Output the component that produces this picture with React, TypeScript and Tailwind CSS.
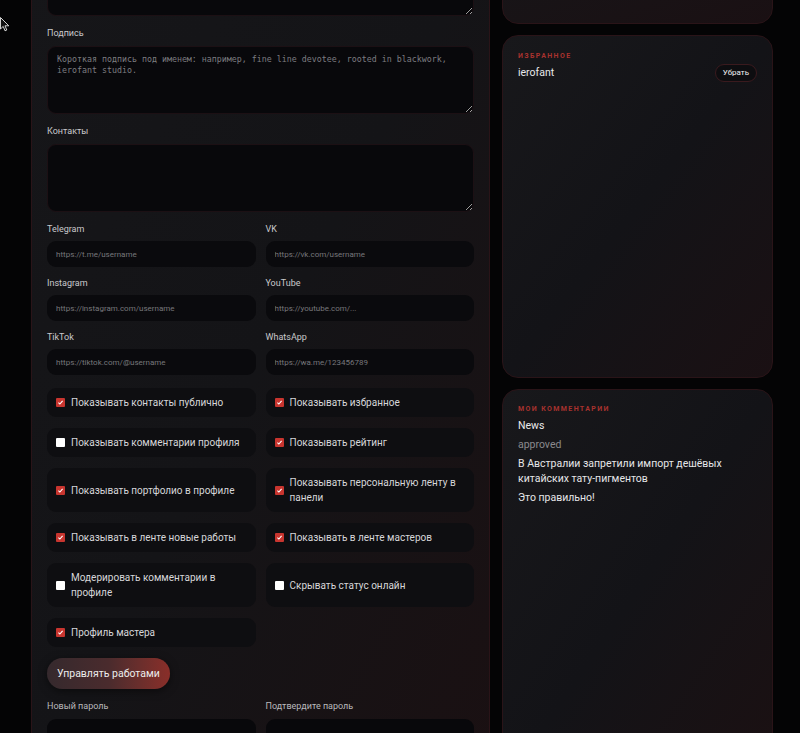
const font = { fontFamily: "Roboto, 'Noto Sans', sans-serif" };

type Check = { label: string; checked: boolean };

const links = [
  { label: "Telegram", ph: "https://t.me/username" },
  { label: "VK", ph: "https://vk.com/username" },
  { label: "Instagram", ph: "https://instagram.com/username" },
  { label: "YouTube", ph: "https://youtube.com/..." },
  { label: "TikTok", ph: "https://tiktok.com/@username" },
  { label: "WhatsApp", ph: "https://wa.me/123456789" },
];

const checks: Check[] = [
  { label: "Показывать контакты публично", checked: true },
  { label: "Показывать избранное", checked: true },
  { label: "Показывать комментарии профиля", checked: false },
  { label: "Показывать рейтинг", checked: true },
  { label: "Показывать портфолио в профиле", checked: true },
  { label: "Показывать персональную ленту в панели", checked: true },
  { label: "Показывать в ленте новые работы", checked: true },
  { label: "Показывать в ленте мастеров", checked: true },
  { label: "Модерировать комментарии в профиле", checked: false },
  { label: "Скрывать статус онлайн", checked: false },
  { label: "Профиль мастера", checked: true },
];

function Label({ children }: { children: React.ReactNode }) {
  return <div className="text-[9px] leading-[12px] text-[#c9c9cc] mb-[7px]">{children}</div>;
}

function Area({ placeholder }: { placeholder?: string }) {
  return (
    <textarea
      placeholder={placeholder}
      className="block w-full h-[68px] rounded-[9px] bg-[#08080b] border border-[#1c1014] px-[9px] py-[7px] font-mono text-[8.3px] leading-[11px] text-[#ddd] placeholder:text-[#7c7c80] outline-none resize-y"
      style={{ fontFamily: "'DejaVu Sans Mono', monospace" }}
    />
  );
}

function Box({ checked }: { checked: boolean }) {
  return (
    <span
      className={
        "shrink-0 w-[9px] h-[9px] rounded-[1px] flex items-center justify-center " +
        (checked ? "bg-[#c8352f]" : "bg-white")
      }
    >
      {checked && (
        <svg viewBox="0 0 10 10" className="w-[7px] h-[7px]">
          <path d="M2 5.2 L4.1 7.2 L8 2.8" fill="none" stroke="white" strokeWidth="1.6" />
        </svg>
      )}
    </span>
  );
}

export default function App() {
  return (
    <div className="relative h-[733px] overflow-hidden bg-[#040405]" style={font}>
      <svg className="absolute left-0 top-[17px] w-[10px] h-[15px] z-10" viewBox="0 0 10 15">
        <path d="M0.5 0.5 L0.5 12 L3.2 9.4 L5 13.8 L6.8 13 L5 8.8 L8.8 8.8 Z" fill="#111" stroke="#e8e8e8" strokeWidth="0.9" />
      </svg>
      <div className="flex items-start gap-[12px] pl-[31px]">
        <div className="w-[459px] -mt-[71px] rounded-[16px] border border-[#2a1418] bg-gradient-to-br from-[#161619] via-[#141417] to-[#1a1012] px-[15px] pt-[18px] pb-[40px]">
          <div className="flex flex-col gap-[11px]">
            <div>
              <Area />
            </div>
            <div>
              <Label>Подпись</Label>
              <Area placeholder="Короткая подпись под именем: например, fine line devotee, rooted in blackwork, ierofant studio." />
            </div>
            <div>
              <Label>Контакты</Label>
              <Area />
            </div>
            <div className="grid grid-cols-2 gap-x-[10px] gap-y-[10px]">
              {links.map((l) => (
                <div key={l.label}>
                  <div className="text-[9px] leading-[12px] text-[#c9c9cc] mb-[6px]">{l.label}</div>
                  <input
                    placeholder={l.ph}
                    className="block w-full h-[26px] rounded-[9px] bg-[#0a0a0d] px-[9px] text-[8px] text-[#ddd] placeholder:text-[#77777b] outline-none"
                  />
                </div>
              ))}
            </div>
            <div className="grid grid-cols-2 gap-x-[10px] gap-y-[11px] mt-[2px]">
              {checks.map((c) => (
                <div
                  key={c.label}
                  className="flex items-center gap-[6px] rounded-[9px] bg-[#0e0e11] pl-[9px] pr-[8px] py-[7px]"
                >
                  <Box checked={c.checked} />
                  <span className="text-[10px] leading-[15px] text-[#d6d6d9]">{c.label}</span>
                </div>
              ))}
            </div>
            <div>
              <button className="h-[31px] w-[123px] rounded-full bg-gradient-to-r from-[#35292d] via-[#4a2b2d] to-[#8a2e29] text-[10.5px] text-[#ececec] shadow-[0_2px_8px_rgba(0,0,0,0.5)]">
                Управлять работами
              </button>
            </div>
            <div className="grid grid-cols-2 gap-x-[10px]">
              <div>
                <div className="text-[9px] leading-[12px] text-[#b9b9bc] mb-[7px]">Новый пароль</div>
                <div className="h-[30px] rounded-[9px] bg-[#08080b]" />
              </div>
              <div>
                <div className="text-[9px] leading-[12px] text-[#b9b9bc] mb-[7px]">Подтвердите пароль</div>
                <div className="h-[30px] rounded-[9px] bg-[#08080b]" />
              </div>
            </div>
          </div>
        </div>

        <div className="w-[271px] -mt-[80px] flex flex-col gap-[11px]">
          <div className="h-[104px] rounded-[16px] border border-[#2a1418] bg-gradient-to-br from-[#161619] to-[#1a1013]" />
          <div className="h-[343px] rounded-[16px] border border-[#2a1418] bg-gradient-to-br from-[#18181b] via-[#131317] to-[#1a1013] px-[15px] pt-[15px]">
            <div className="text-[7px] font-bold tracking-[1.4px] text-[#a8322e]">ИЗБРАННОЕ</div>
            <div className="flex items-start justify-between mt-[3px]">
              <span className="text-[10.5px] text-[#e8e8ea]">ierofant</span>
              <button className="-mt-[1px] h-[18px] px-[7px] rounded-full border border-[#3a1a1e] bg-[#0d0d10] text-[8px] text-[#f0f0f0]">
                Убрать
              </button>
            </div>
          </div>
          <div className="h-[400px] rounded-[16px] border border-[#2a1418] bg-gradient-to-br from-[#18181b] via-[#131317] to-[#1b1012] px-[15px] pt-[14px]">
            <div className="text-[7px] font-bold tracking-[1.4px] text-[#a8322e]">МОИ КОММЕНТАРИИ</div>
            <div className="mt-[3px] text-[10.5px] leading-[15px] text-[#eaeaec]">News</div>
            <div className="mt-[4px] text-[10.5px] leading-[15px] text-[#8a8a8e]">approved</div>
            <div className="mt-[4px] text-[10.5px] leading-[15px] text-[#e6e6e8]">
              В Австралии запретили импорт дешёвых
              <br />
              китайских тату-пигментов
            </div>
            <div className="mt-[4px] text-[10.5px] leading-[15px] text-[#e6e6e8]">Это правильно!</div>
          </div>
        </div>
      </div>
    </div>
  );
}
